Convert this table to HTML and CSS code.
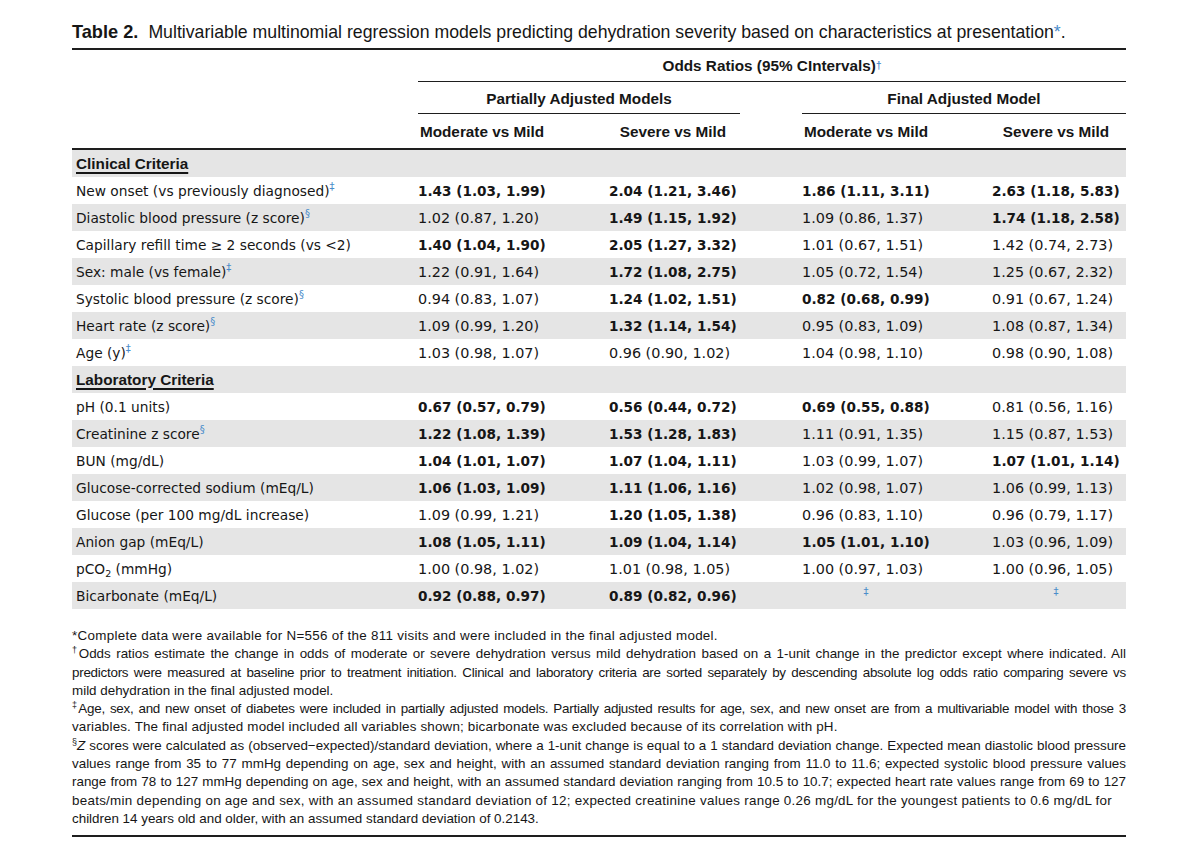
FILE: index.html
```html
<!DOCTYPE html>
<html lang="en">
<head>
<meta charset="utf-8">
<title>Table 2</title>
<link rel="stylesheet" href="styles.css">
</head>
<body>
<div class="page">
  <h1 class="title"><b class="title-num">Table 2.</b><span class="title-text">Multivariable multinomial regression models predicting dehydration severity based on characteristics at presentation<span class="mark">*</span>.</span></h1>

  <div class="table">
    <div class="hrow odds">
      <div></div>
      <div class="hcell">Odds Ratios (95% CIntervals)<sup class="mark">†</sup></div>
    </div>
    <div class="hrow groups">
      <div></div>
      <div class="hcell">Partially Adjusted Models</div>
      <div></div>
      <div class="hcell">Final Adjusted Model</div>
    </div>
    <div class="hrow cols">
      <div></div>
      <div class="colh"><span class="box">Moderate vs Mild</span></div>
      <div class="colh"><span class="box">Severe vs Mild</span></div>
      <div class="colh"><span class="box">Moderate vs Mild</span></div>
      <div class="colh"><span class="box">Severe vs Mild</span></div>
    </div>

    <div class="row alt"><div class="label"><span class="sect">Clinical Criteria</span></div><div></div><div></div><div></div><div></div></div>
    <div class="row"><div class="label">New onset (vs previously diagnosed)<sup class="mark">‡</sup></div><div class="val b">1.43 (1.03, 1.99)</div><div class="val b">2.04 (1.21, 3.46)</div><div class="val b">1.86 (1.11, 3.11)</div><div class="val b">2.63 (1.18, 5.83)</div></div>
    <div class="row alt"><div class="label">Diastolic blood pressure (z score)<sup class="mark">§</sup></div><div class="val">1.02 (0.87, 1.20)</div><div class="val b">1.49 (1.15, 1.92)</div><div class="val">1.09 (0.86, 1.37)</div><div class="val b">1.74 (1.18, 2.58)</div></div>
    <div class="row"><div class="label">Capillary refill time ≥ 2 seconds (vs &lt;2)</div><div class="val b">1.40 (1.04, 1.90)</div><div class="val b">2.05 (1.27, 3.32)</div><div class="val">1.01 (0.67, 1.51)</div><div class="val">1.42 (0.74, 2.73)</div></div>
    <div class="row alt"><div class="label">Sex: male (vs female)<sup class="mark">‡</sup></div><div class="val">1.22 (0.91, 1.64)</div><div class="val b">1.72 (1.08, 2.75)</div><div class="val">1.05 (0.72, 1.54)</div><div class="val">1.25 (0.67, 2.32)</div></div>
    <div class="row"><div class="label">Systolic blood pressure (z score)<sup class="mark">§</sup></div><div class="val">0.94 (0.83, 1.07)</div><div class="val b">1.24 (1.02, 1.51)</div><div class="val b">0.82 (0.68, 0.99)</div><div class="val">0.91 (0.67, 1.24)</div></div>
    <div class="row alt"><div class="label">Heart rate (z score)<sup class="mark">§</sup></div><div class="val">1.09 (0.99, 1.20)</div><div class="val b">1.32 (1.14, 1.54)</div><div class="val">0.95 (0.83, 1.09)</div><div class="val">1.08 (0.87, 1.34)</div></div>
    <div class="row"><div class="label">Age (y)<sup class="mark">‡</sup></div><div class="val">1.03 (0.98, 1.07)</div><div class="val">0.96 (0.90, 1.02)</div><div class="val">1.04 (0.98, 1.10)</div><div class="val">0.98 (0.90, 1.08)</div></div>

    <div class="row alt"><div class="label"><span class="sect">Laboratory Criteria</span></div><div></div><div></div><div></div><div></div></div>
    <div class="row"><div class="label">pH (0.1 units)</div><div class="val b">0.67 (0.57, 0.79)</div><div class="val b">0.56 (0.44, 0.72)</div><div class="val b">0.69 (0.55, 0.88)</div><div class="val">0.81 (0.56, 1.16)</div></div>
    <div class="row alt"><div class="label">Creatinine z score<sup class="mark">§</sup></div><div class="val b">1.22 (1.08, 1.39)</div><div class="val b">1.53 (1.28, 1.83)</div><div class="val">1.11 (0.91, 1.35)</div><div class="val">1.15 (0.87, 1.53)</div></div>
    <div class="row"><div class="label">BUN (mg/dL)</div><div class="val b">1.04 (1.01, 1.07)</div><div class="val b">1.07 (1.04, 1.11)</div><div class="val">1.03 (0.99, 1.07)</div><div class="val b">1.07 (1.01, 1.14)</div></div>
    <div class="row alt"><div class="label">Glucose-corrected sodium (mEq/L)</div><div class="val b">1.06 (1.03, 1.09)</div><div class="val b">1.11 (1.06, 1.16)</div><div class="val">1.02 (0.98, 1.07)</div><div class="val">1.06 (0.99, 1.13)</div></div>
    <div class="row"><div class="label">Glucose (per 100 mg/dL increase)</div><div class="val">1.09 (0.99, 1.21)</div><div class="val b">1.20 (1.05, 1.38)</div><div class="val">0.96 (0.83, 1.10)</div><div class="val">0.96 (0.79, 1.17)</div></div>
    <div class="row alt"><div class="label">Anion gap (mEq/L)</div><div class="val b">1.08 (1.05, 1.11)</div><div class="val b">1.09 (1.04, 1.14)</div><div class="val b">1.05 (1.01, 1.10)</div><div class="val">1.03 (0.96, 1.09)</div></div>
    <div class="row"><div class="label">pCO<sub>2</sub> (mmHg)</div><div class="val">1.00 (0.98, 1.02)</div><div class="val">1.01 (0.98, 1.05)</div><div class="val">1.00 (0.97, 1.03)</div><div class="val">1.00 (0.96, 1.05)</div></div>
    <div class="row alt"><div class="label">Bicarbonate (mEq/L)</div><div class="val b">0.92 (0.88, 0.97)</div><div class="val b">0.89 (0.82, 0.96)</div><div class="val"><span class="box"><sup class="mark">‡</sup></span></div><div class="val"><span class="box"><sup class="mark">‡</sup></span></div></div>
  </div>

  <div class="notes">
    <span class="line wide">*Complete data were available for N=556 of the 811 visits and were included in the final adjusted model.</span>
    <span class="line full"><sup>†</sup>Odds ratios estimate the change in odds of moderate or severe dehydration versus mild dehydration based on a 1-unit change in the predictor except where indicated. All</span>
    <span class="line full tight">predictors were measured at baseline prior to treatment initiation. Clinical and laboratory criteria are sorted separately by descending absolute log odds ratio comparing severe vs</span>
    <span class="line">mild dehydration in the final adjusted model.</span>
    <span class="line full tight"><sup>‡</sup>Age, sex, and new onset of diabetes were included in partially adjusted models. Partially adjusted results for age, sex, and new onset are from a multivariable model with those 3</span>
    <span class="line mid">variables. The final adjusted model included all variables shown; bicarbonate was excluded because of its correlation with pH.</span>
    <span class="line full"><sup>§</sup><i>Z</i> scores were calculated as (observed−expected)/standard deviation, where a 1-unit change is equal to a 1 standard deviation change. Expected mean diastolic blood pressure</span>
    <span class="line full">values range from 35 to 77 mmHg depending on age, sex and height, with an assumed standard deviation ranging from 11.0 to 11.6; expected systolic blood pressure values</span>
    <span class="line full">range from 78 to 127 mmHg depending on age, sex and height, with an assumed standard deviation ranging from 10.5 to 10.7; expected heart rate values range from 69 to 127</span>
    <span class="line wider">beats/min depending on age and sex, with an assumed standard deviation of 12; expected creatinine values range 0.26 mg/dL for the youngest patients to 0.6 mg/dL for</span>
    <span class="line">children 14 years old and older, with an assumed standard deviation of 0.2143.</span>
  </div>
</div>
</body>
</html>
```

FILE: styles.css
```css
* { box-sizing: border-box; }

html, body {
  margin: 0;
  padding: 0;
  background: #ffffff;
  color: #161616;
}

.page {
  width: 1054px;
  margin-left: 72px;
  padding-top: 22px;
  font-family: "Liberation Sans", Arial, sans-serif;
}

.title {
  margin: 0;
  height: 28px;
  line-height: 21px;
  font-size: 17.7px;
  font-weight: normal;
  border-bottom: 2px solid #1e1e1e;
  white-space: nowrap;
}

.title-num {
  font-weight: bold;
  font-size: 18.2px;
  margin-right: 10px;
}

.mark {
  color: #4a8cca;
}

sup {
  font-size: 10px;
  line-height: 0;
  vertical-align: 6px;
}

sub {
  font-size: 9.5px;
  line-height: 0;
  vertical-align: -3px;
}

/* ---------- header ---------- */
.hrow {
  display: grid;
  font-weight: bold;
  font-size: 15.3px;
}

.hrow.odds {
  grid-template-columns: 346px 708px;
  height: 32px;
}

.hrow.groups {
  grid-template-columns: 346px 322px 62px 324px;
  height: 32px;
}

.hcell {
  display: flex;
  align-items: center;
  justify-content: center;
  border-bottom: 1px solid #1e1e1e;
}

.hrow.odds .hcell {
  padding-top: 1px;
}

.hrow.groups .hcell {
  padding-top: 3px;
}

.hrow.cols {
  grid-template-columns: 346px 191px 193px 190px 134px;
  height: 36px;
  padding-top: 2px;
  border-bottom: 2px solid #1e1e1e;
  align-items: center;
}

.box {
  display: inline-block;
  width: 128px;
  text-align: center;
}

/* ---------- body rows ---------- */
.row {
  display: grid;
  grid-template-columns: 346px 191px 193px 190px 134px;
  height: 27px;
  align-items: center;
  font-family: "DejaVu Sans", sans-serif;
  white-space: nowrap;
}

.row.alt {
  background: #e5e5e5;
}

.label {
  padding-left: 4px;
  font-size: 13.75px;
}

.sect {
  font-family: "Liberation Sans", Arial, sans-serif;
  font-weight: bold;
  font-size: 15.3px;
  text-decoration: underline;
  text-decoration-thickness: 2px;
  text-underline-offset: 3px;
}

.val {
  font-size: 14.4px;
}

.val.b {
  font-weight: bold;
  font-size: 13.6px;
}

/* ---------- notes ---------- */
.notes {
  margin-top: 18px;
  padding-bottom: 7px;
  border-bottom: 2px solid #1e1e1e;
  font-size: 13.4px;
  line-height: 18.3px;
}

.notes .line {
  display: block;
  white-space: nowrap;
}

.notes .line.full {
  text-align: justify;
  text-align-last: justify;
}

.notes .line.tight {
  letter-spacing: -0.25px;
}

.notes .line.wide {
  letter-spacing: 0.29px;
}

.notes .line.mid {
  letter-spacing: 0.17px;
}

.notes .line.wider {
  letter-spacing: 0.27px;
}

.notes sup {
  font-size: 9px;
  vertical-align: 5px;
}
```
